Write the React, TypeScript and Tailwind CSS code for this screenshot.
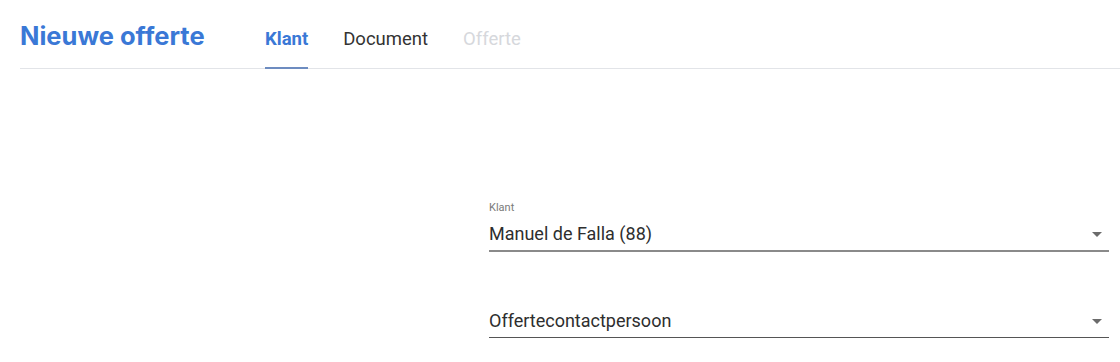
const tabs = [
  { label: "Klant", state: "active" },
  { label: "Document", state: "idle" },
  { label: "Offerte", state: "disabled" },
];

function Caret() {
  return (
    <svg width="10" height="5" viewBox="0 0 10 5" className="block">
      <path d="M0 0h10L5 5z" fill="#6b6b6b" />
    </svg>
  );
}

function SelectField({
  label,
  value,
  line,
}: {
  label?: string;
  value: string;
  line: string;
}) {
  return (
    <div className="flex flex-col">
      <div className="h-[16px] text-[11px] leading-[16px] text-[#7a7a7a]">{label ?? ""}</div>
      <div className={`flex h-[36px] items-end justify-between pb-[4px] ${line}`}>
        <span className="text-[18px] leading-6 text-[#2e2e2e]">{value}</span>
        <span className="mb-[9px] pr-[7px]">
          <Caret />
        </span>
      </div>
    </div>
  );
}

export default function App() {
  return (
    <div className="h-[362px] w-[1120px] overflow-hidden bg-white font-['Roboto',sans-serif]">
      {/* Header */}
      <div className="ml-5 flex h-[69px] items-start border-b border-[#e2e4e8]">
        <h1 className="w-[245px] pt-[24px] font-['Inter',sans-serif] text-[25.5px] leading-6 font-bold text-[#3a78d6]">
          Nieuwe offerte
        </h1>
        <nav className="flex gap-[35px]">
          {tabs.map((t) => (
            <div
              key={t.label}
              className={
                t.state === "active"
                  ? "-mb-px h-[69px] border-b-2 border-[#6d8cc0] pt-[27px] text-[18.5px] leading-6 font-bold text-[#3a78d6]"
                  : t.state === "idle"
                    ? "-mb-px h-[69px] border-b-2 border-transparent pt-[27px] text-[18.5px] leading-6 text-[#333]"
                    : "-mb-px h-[69px] border-b-2 border-transparent pt-[27px] text-[18.5px] leading-6 text-[#d6d8dc]"
              }
            >
              {t.label}
            </div>
          ))}
        </nav>
      </div>

      {/* Form */}
      <div className="mt-[131px] flex flex-col gap-[34px] pl-[489px] pr-[11px]">
        <SelectField label="Klant" value="Manuel de Falla (88)" line="border-b-2 border-[#8a8a8a]" />
        <SelectField value="Offertecontactpersoon" line="border-b border-[#555]" />
      </div>
    </div>
  );
}
